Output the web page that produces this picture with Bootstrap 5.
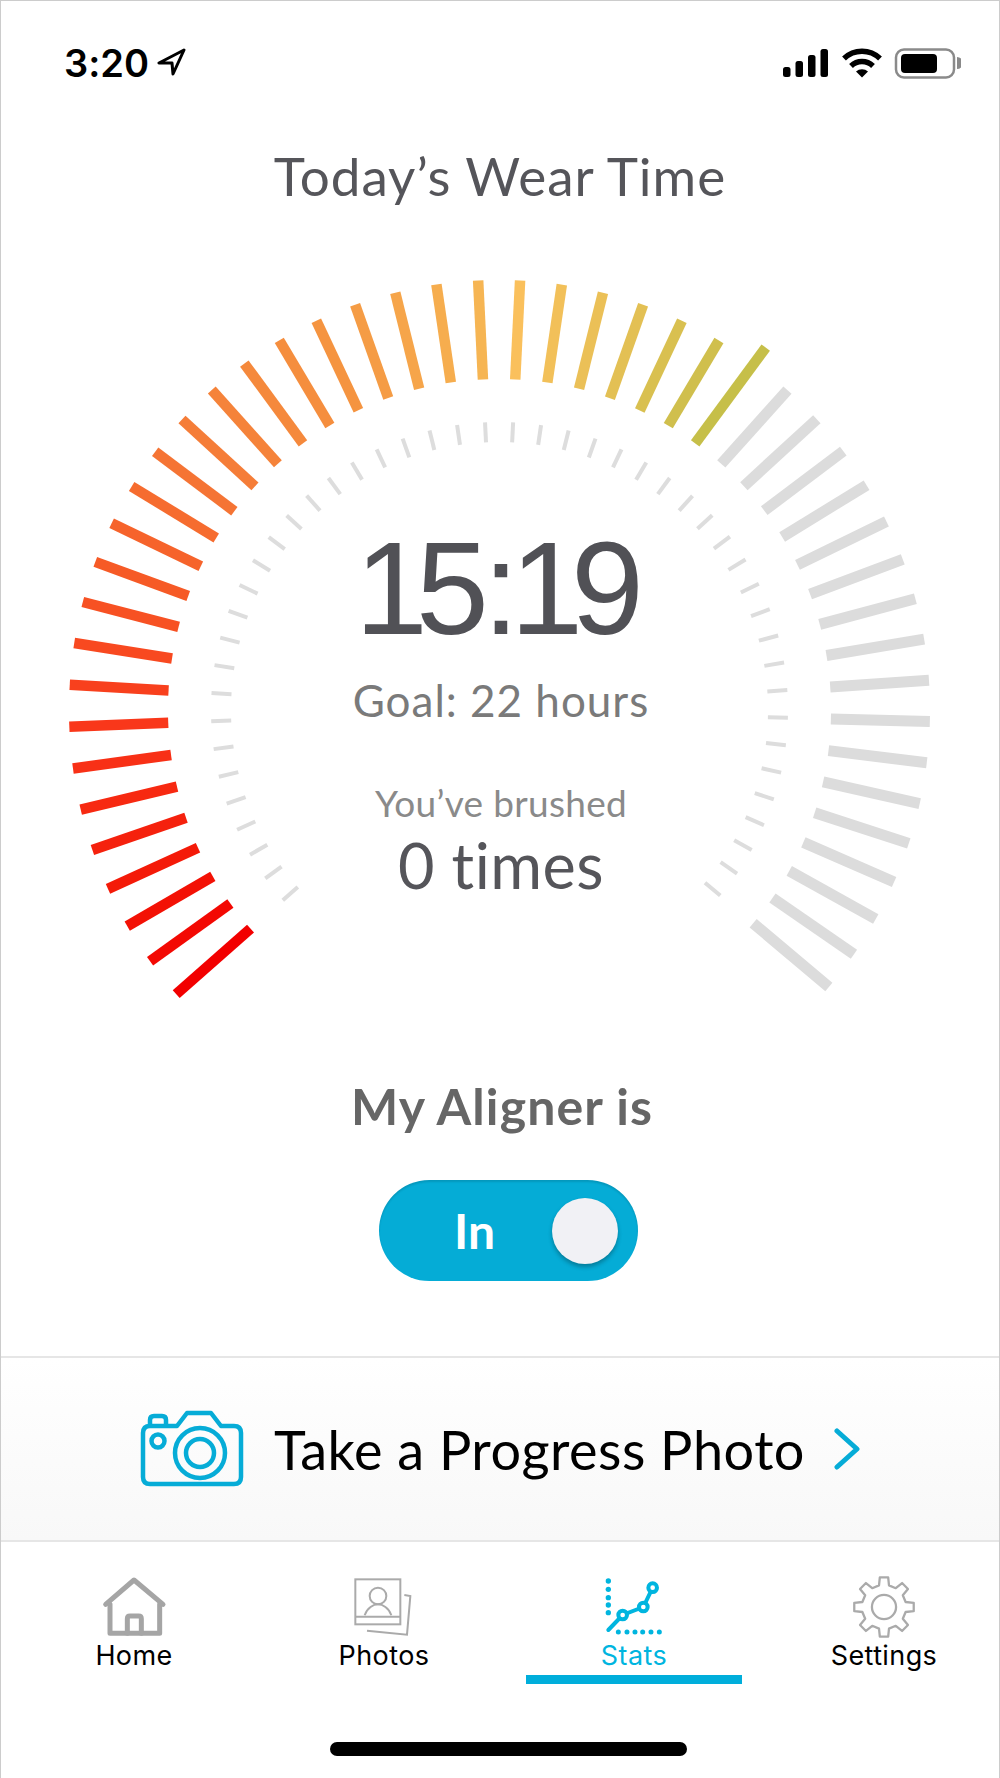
<!DOCTYPE html>
<html lang="en">
<head>
    <meta charset="UTF-8">
    <meta name="viewport" content="width=device-width, initial-scale=1.0">
    <title>Today's Wear Time</title>
    <link href="https://cdn.jsdelivr.net/npm/bootstrap@5.3.0/dist/css/bootstrap.min.css" rel="stylesheet">
    <style>
        body {
            background: #fff;
            font-family: Lato, "Liberation Sans", sans-serif;
            font-variant-ligatures: none;
        }

        .app-frame {
            width: 1000px;
            height: 1778px;
            border: 1px solid #ccc;
            border-bottom: 0;
        }

        .status-row {
            height: 117px;
            padding: 46px 38px 0 63px;
            font-family: Inter, sans-serif;
            font-size: 38px;
            font-weight: 600;
            line-height: 32px;
            color: #000;
        }

        .wear-title {
            height: 116px;
            margin: 0;
            font-size: 53px;
            font-weight: 400;
            line-height: 116px;
            letter-spacing: 1px;
            color: #55555a;
        }

        .gauge-stack {
            display: grid;
            height: 784px;
        }

        .gauge-stack > * {
            grid-area: 1 / 1;
        }

        .gauge-svg {
            width: 1000px;
            height: 784px;
        }

        .gauge-text {
            padding-top: 280px;
        }

        .big-time {
            padding-right: 15px;
            font-family: "Liberation Sans", sans-serif;
            font-size: 131px;
            line-height: 150px;
            letter-spacing: -12px;
            color: #515156;
        }

        .time-colon {
            margin: 0 3px 0 6px;
        }

        .goal-text {
            margin-top: 11px;
            font-size: 44px;
            line-height: 50px;
            letter-spacing: 1px;
            color: #7a7a7a;
        }

        .brushed-text {
            margin-top: 56px;
            font-size: 37px;
            line-height: 44px;
            letter-spacing: .3px;
            color: #8a8a8a;
        }

        .times-text {
            margin-top: 5px;
            font-size: 63px;
            line-height: 70px;
            letter-spacing: .5px;
            color: #55555a;
        }

        .aligner-label {
            margin-top: 58px;
            padding-left: 4px;
            font-size: 50px;
            font-weight: 700;
            line-height: 60px;
            letter-spacing: 1.1px;
            color: #666;
        }

        .aligner-toggle {
            width: 259px;
            height: 101px;
            margin: 44px 0 0 378px;
            padding: 0 20px 0 0;
            border-radius: 51px;
            background: #05acd6;
            box-shadow: inset 0 2px 2px rgba(0, 0, 0, .12);
            color: #fff;
            font-size: 48px;
            font-weight: 700;
        }

        .toggle-word {
            width: 173px;
            padding-left: 18px;
            text-align: center;
        }

        .toggle-knob {
            width: 66px;
            height: 66px;
            border-radius: 50%;
            background: #f1f1f5;
            box-shadow: 0 3px 4px rgba(0, 0, 0, .28);
        }

        .photo-band {
            height: 186px;
            margin-top: 75px;
            border-top: 2px solid #e6e6e6;
            border-bottom: 2px solid #e6e6e6;
            background: linear-gradient(#fff, #f8f8f8);
            color: #000;
            font-size: 54px;
            letter-spacing: .5px;
            gap: 29px;
        }

        .tab-row {
            height: 148px;
            padding: 34px 0 0 25px;
            gap: 34px;
            font-family: Inter, sans-serif;
            font-size: 27px;
            line-height: 36px;
            letter-spacing: .4px;
            color: #000;
        }

        .tab-item {
            width: 216px;
            height: 108px;
        }

        .tab-item svg {
            display: block;
            height: 62px;
            margin: 0 auto;
        }

        .tab-item.active-tab {
            color: #00b5df;
            border-bottom: 9px solid #00aedb;
        }

        .home-bar {
            width: 357px;
            height: 14px;
            margin: 52px 0 0 329px;
            border-radius: 7px;
            background: #000;
        }
    </style>
</head>
<body>
    <div class="app-frame d-flex flex-column">
        <div class="status-row d-flex justify-content-between">
            <div class="d-flex gap-2">
                <span>3:20</span>
                <svg width="30" height="30" viewBox="158 46 30 30"><path d="M185 49 160 62 173 62 174 73Z" fill="none" stroke="#000" stroke-width="3" stroke-linejoin="round"/></svg>
            </div>
            <svg width="180" height="34" viewBox="782 45 180 34">
                <rect x="784" y="65" width="7.5" height="10" rx="2.5"/>
                <rect x="796.5" y="59" width="7.5" height="16" rx="2.5"/>
                <rect x="809" y="53" width="7.5" height="22" rx="2.5"/>
                <rect x="821.5" y="47" width="7.5" height="28" rx="2.5"/>
                <path d="M845 56.5a26 26 0 0 1 36 0" fill="none" stroke="#000" stroke-width="5.5"/>
                <path d="M852 64a16 16 0 0 1 22 0" fill="none" stroke="#000" stroke-width="5.5"/>
                <path d="M857 69.5a9 9 0 0 1 12 0L863 75.5Z"/>
                <rect x="897" y="47.5" width="58" height="28" rx="8" fill="none" stroke="#8a8a8a" stroke-width="2.5"/>
                <rect x="902" y="52" width="36" height="19" rx="4"/>
                <path d="M958 55a6 6 0 0 1 0 12Z" fill="#8a8a8a"/>
            </svg>
        </div>

        <h1 class="wear-title text-center">Today’s Wear Time</h1>

        <div class="gauge-stack">
            <svg class="gauge-svg" id="gauge" viewBox="0 233 1000 784"></svg>
            <div class="gauge-text text-center">
                <div class="big-time">15<span class="time-colon">:</span>19</div>
                <div class="goal-text">Goal: 22 hours</div>
                <div class="brushed-text">You’ve brushed</div>
                <div class="times-text">0 times</div>
            </div>
        </div>

        <div class="aligner-label text-center">My Aligner is</div>
        <div class="aligner-toggle d-flex align-items-center">
            <span class="toggle-word">In</span>
            <span class="toggle-knob flex-shrink-0"></span>
        </div>

        <div class="photo-band d-flex align-items-center justify-content-center">
            <svg width="105" height="78" viewBox="143 1411 105 78" fill="none" stroke="#06acd7" stroke-width="4.5" stroke-linejoin="round">
                <path d="M153 1427H180L190 1414H214L224 1427H237Q244 1427 244 1434V1478Q244 1485 237 1485H153Q146 1485 146 1478V1434Q146 1427 153 1427Z"/>
                <path d="M153 1427V1421Q153 1417 157 1417H165Q169 1417 169 1421V1427"/>
                <circle cx="161" cy="1442" r="6.5"/>
                <circle cx="203" cy="1454" r="25"/>
                <circle cx="203" cy="1454" r="14"/>
            </svg>
            <span>Take a Progress Photo</span>
            <svg width="26" height="42" viewBox="835 1428 26 42" fill="none" stroke="#06acd7" stroke-width="5" stroke-linecap="round" stroke-linejoin="round"><path d="M838 1431 858 1449 838 1467"/></svg>
        </div>

        <div class="tab-row d-flex text-center">
            <div class="tab-item">
                <svg viewBox="80 50 210 186" fill="none" stroke="#a5a5a5" stroke-width="15" stroke-linejoin="round" stroke-linecap="round">
                    <path d="M100 135 185 62 272 135"/>
                    <path d="M113 135V222H262V135"/>
                    <path d="M165 222V178Q165 170 173 170H199Q207 170 207 178V222"/>
                </svg>
                Home
            </div>
            <div class="tab-item">
                <svg viewBox="850 50 190 186" fill="none" stroke="#aaa" stroke-width="6">
                    <rect x="860" y="60" width="135" height="135"/>
                    <path d="M860 172H995"/>
                    <circle cx="928" cy="110" r="25"/>
                    <path d="M888 168C895 145 915 135 928 135S961 145 968 168"/>
                    <path d="M1007 107 1025 110 1015 226 895 214"/>
                </svg>
                Photos
            </div>
            <div class="tab-item active-tab">
                <svg viewBox="303 50 190 186" fill="none" stroke="#00b5df" stroke-width="12">
                    <g fill="#00b5df" stroke="none">
                        <circle cx="322" cy="65" r="8"/><circle cx="322" cy="90" r="8"/><circle cx="322" cy="115" r="8"/><circle cx="322" cy="137" r="8"/><circle cx="322" cy="160" r="8"/>
                        <circle cx="352" cy="218" r="7.5"/><circle cx="378" cy="218" r="7.5"/><circle cx="402" cy="218" r="7.5"/><circle cx="425" cy="218" r="7.5"/><circle cx="450" cy="218" r="7.5"/><circle cx="475" cy="218" r="7.5"/>
                    </g>
                    <path d="M322 212 365 167 427 143 455 85" stroke-linecap="round"/>
                    <g fill="#fff"><circle cx="365" cy="167" r="13"/><circle cx="427" cy="143" r="13"/><circle cx="455" cy="85" r="13"/></g>
                </svg>
                Stats
            </div>
            <div class="tab-item">
                <svg viewBox="1053 48 190 190" fill="none" stroke="#aaa" stroke-width="7">
                    <path id="gear" stroke-linejoin="round"/>
                    <circle cx="1148" cy="143" r="37"/>
                </svg>
                Settings
            </div>
        </div>

        <div class="home-bar"></div>
    </div>

    <script src="https://cdn.jsdelivr.net/npm/bootstrap@5.3.0/dist/js/bootstrap.bundle.min.js"></script>
    <script>
        // colour stops along the filled part of the gauge (bar index, r, g, b)
        const stops = [[0, 242, 0, 0], [3, 244, 26, 8], [7, 249, 55, 26], [11, 246, 90, 38], [15, 245, 125, 56],
            [19, 245, 148, 64], [23, 246, 181, 83], [24, 250, 192, 92], [27, 227, 192, 84], [30, 198, 191, 73]];

        function barColor(i) {
            if (i > 30) return '#dcdcdc';
            let k = 0;
            while (k < stops.length - 2 && i > stops[k + 1][0]) k++;
            const a = stops[k], b = stops[k + 1], t = (i - a[0]) / (b[0] - a[0]);
            return `rgb(${[1, 2, 3].map(n => Math.round(a[n] + (b[n] - a[n]) * t)).join(',')})`;
        }

        function line(cx, deg, r1, r2, color, width) {
            const a = deg * Math.PI / 180, s = Math.sin(a), c = Math.cos(a), cy = 709;
            return `<line x1="${cx + r1 * s}" y1="${cy - r1 * c}" x2="${cx + r2 * s}" y2="${cy - r2 * c}" stroke="${color}" stroke-width="${width}"/>`;
        }

        let svg = '';
        for (let i = 0; i < 48; i++) {
            // the unfilled bars sit a touch closer together than the filled ones
            const filled = i <= 30;
            const deg = filled ? -131.35 + 5.59 * i : 41.95 + 5.51 * (i - 31);
            const cx = filled ? 498 : 499;
            svg += line(cx, deg, 331, i === 30 ? 450 : 430, barColor(i), filled ? 10.5 : 11);
            svg += line(cx, deg, 268, 288, '#dddddd', 4);
        }
        document.getElementById('gauge').innerHTML = svg;

        // gear outline, 8 teeth
        let d = '';
        for (let k = 0; k < 8; k++) {
            [[68, -13], [92, -8], [92, 8], [68, 13]].forEach(([r, off]) => {
                const a = (k * 45 + off) * Math.PI / 180;
                d += `${d ? 'L' : 'M'}${1148 + r * Math.sin(a)} ${143 - r * Math.cos(a)}`;
            });
        }
        document.getElementById('gear').setAttribute('d', d + 'Z');
    </script>
</body>
</html>
